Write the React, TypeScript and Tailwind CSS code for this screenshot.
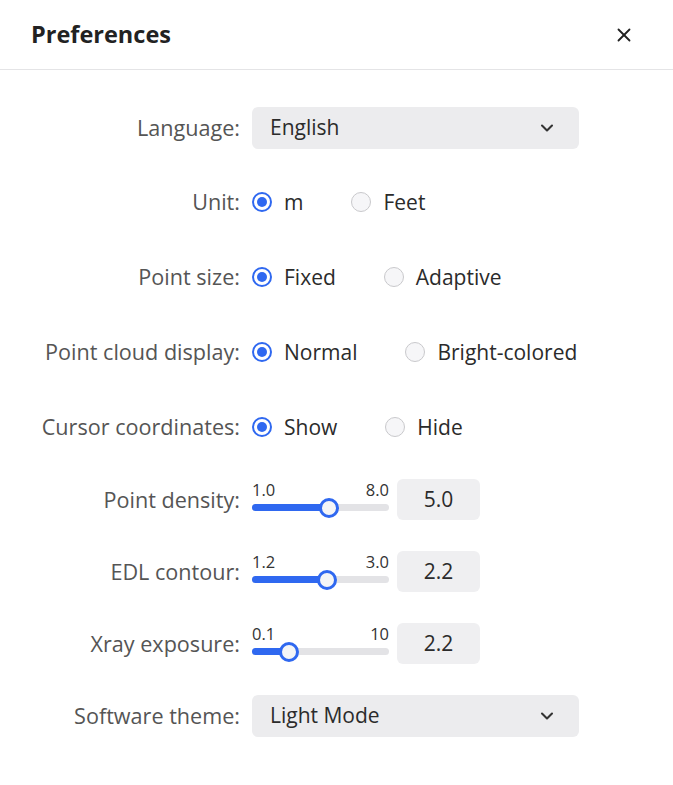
import { ChevronDown, X } from 'lucide-react'

type RadioOpt = { label: string; checked?: boolean }

function Radio({ label, checked }: RadioOpt) {
  return (
    <label className="flex items-center gap-[12px]">
      {checked ? (
        <span className="flex h-5 w-5 items-center justify-center rounded-full border-2 border-[#2f68f0] bg-white">
          <span className="h-[10px] w-[10px] rounded-full bg-[#2f68f0]" />
        </span>
      ) : (
        <span className="h-5 w-5 rounded-full border border-[#c9c9cc] bg-[#f6f6f8]" />
      )}
      <span className="text-[21px] leading-[28px] text-[#2b2b2b]">{label}</span>
    </label>
  )
}

function Row({ label, h, children }: { label: string; h: string; children: React.ReactNode }) {
  return (
    <div className={`flex items-center ${h}`}>
      <div className="w-[241px] shrink-0 pr-[1px] text-right text-[21.6px] leading-[28px] text-[#555]">{label}</div>
      <div className="ml-[11px] flex items-center">{children}</div>
    </div>
  )
}

function Select({ value }: { value: string }) {
  return (
    <div className="flex h-[42px] w-[327px] items-center justify-between rounded-[6px] bg-[#ececee] pl-[18px] pr-[22px]">
      <span className="text-[21px] text-[#2b2b2b]">{value}</span>
      <ChevronDown className="h-5 w-5 text-[#333]" strokeWidth={2.5} />
    </div>
  )
}

function Slider({ min, max, pct, value }: { min: string; max: string; pct: number; value: string }) {
  return (
    <div className="flex h-[41px] items-start gap-2">
      <div className="w-[137px] pt-[1px]">
        <div className="flex justify-between text-[16.5px] leading-[19px] text-[#333]">
          <span>{min}</span>
          <span>{max}</span>
        </div>
        <div className="relative mt-[5px] h-[7px] rounded-full bg-[#e3e3e6]">
          <div className="absolute left-0 top-0 h-[7px] rounded-full bg-[#2f68f0]" style={{ width: `${pct}px` }} />
          <div
            className="absolute top-1/2 h-5 w-5 -translate-x-1/2 -translate-y-1/2 rounded-full border-[3px] border-[#2f68f0] bg-[#f4f5f7]"
            style={{ left: `${pct}px` }}
          />
        </div>
      </div>
      <div className="flex h-[41px] w-[83px] items-center justify-center rounded-[6px] bg-[#efeff1] text-[21px] text-[#2b2b2b]">
        {value}
      </div>
    </div>
  )
}

export default function App() {
  return (
    <div className="h-[785px] w-[673px] bg-white" style={{ fontFamily: '"Open Sans", "Noto Sans", sans-serif' }}>
      <div className="flex h-[70px] items-center justify-between border-b border-[#e4e4e6] pl-[31px] pr-[38px]">
        <h1 className="text-[23.5px] font-bold text-[#222]">Preferences</h1>
        <X className="h-[22px] w-[22px] text-[#222]" strokeWidth={2} />
      </div>
      <div className="flex flex-col pt-[37px]">
        <Row label="Language:" h="h-[42px]">
          <Select value="English" />
        </Row>
        <div className="mt-[39px]">
          <Row label="Unit:" h="h-[28px]">
            <div className="flex items-center gap-[48px]">
              <Radio label="m" checked />
              <Radio label="Feet" />
            </div>
          </Row>
        </div>
        <div className="mt-[47px]">
          <Row label="Point size:" h="h-[28px]">
            <div className="flex items-center gap-[48px]">
              <Radio label="Fixed" checked />
              <Radio label="Adaptive" />
            </div>
          </Row>
        </div>
        <div className="mt-[47px]">
          <Row label="Point cloud display:" h="h-[28px]">
            <div className="flex items-center gap-[48px]">
              <Radio label="Normal" checked />
              <Radio label="Bright-colored" />
            </div>
          </Row>
        </div>
        <div className="mt-[47px]">
          <Row label="Cursor coordinates:" h="h-[28px]">
            <div className="flex items-center gap-[48px]">
              <Radio label="Show" checked />
              <Radio label="Hide" />
            </div>
          </Row>
        </div>
        <div className="mt-[38px]">
          <Row label="Point density:" h="h-[41px]">
            <Slider min="1.0" max="8.0" pct={77} value="5.0" />
          </Row>
        </div>
        <div className="mt-[31px]">
          <Row label="EDL contour:" h="h-[41px]">
            <Slider min="1.2" max="3.0" pct={75} value="2.2" />
          </Row>
        </div>
        <div className="mt-[31px]">
          <Row label="Xray exposure:" h="h-[41px]">
            <Slider min="0.1" max="10" pct={37} value="2.2" />
          </Row>
        </div>
        <div className="mt-[31px]">
          <Row label="Software theme:" h="h-[42px]">
            <Select value="Light Mode" />
          </Row>
        </div>
      </div>
    </div>
  )
}
